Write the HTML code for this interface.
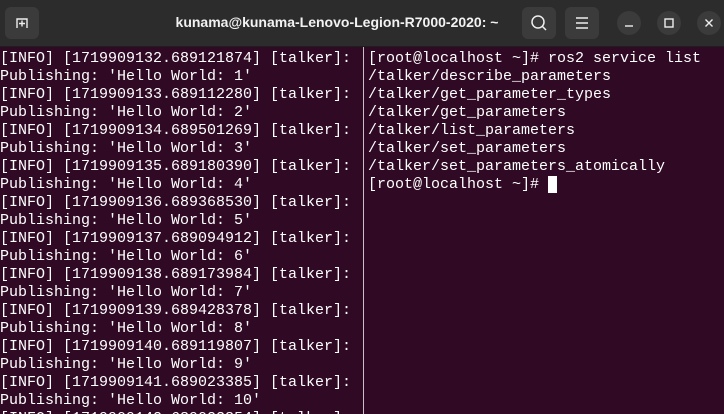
<!DOCTYPE html>
<html style="width:724px;height:414px;overflow:hidden"><head><style>
body{margin:0;width:724px;height:414px;overflow:hidden;position:relative;background:#300a24;font-family:"Liberation Sans",sans-serif}
.bar{position:absolute;left:0;top:0;width:724px;height:46px;background:#2c2c2c;border-bottom:1px solid #1e1e1e}
.btn{position:absolute;top:7px;height:32px;background:#3b3b3b;border-radius:6px}
.c{position:absolute;top:11px;width:24px;height:24px;border-radius:50%;background:#3b3b3b}
.title{position:absolute;left:0;width:674px;top:14px;text-align:center;color:#f2f2f2;font-weight:bold;font-size:14px}
pre{position:absolute;margin:0;font-family:"Liberation Mono",monospace;font-size:15px;line-height:18px;color:#fff}
.div{position:absolute;left:363px;top:47px;width:1px;height:367px;background:#c8c0c4}
</style></head><body>
<div class="bar">
<div class="btn" style="left:5px;width:34px"><svg width="34" height="32"><path d="M12 21v-9h10v9M17 13.5v6M14 16.5h6" stroke="#eee" stroke-width="1.4" fill="none"/></svg></div>
<div class="title">kunama@kunama-Lenovo-Legion-R7000-2020: ~</div>
<div class="btn" style="left:522px;width:34px"><svg width="34" height="32"><circle cx="16" cy="15" r="6" stroke="#eee" stroke-width="1.5" fill="none"/><path d="M20.5 19.5l3.5 3.5" stroke="#eee" stroke-width="1.5"/></svg></div>
<div class="btn" style="left:565px;width:34px"><svg width="34" height="32"><path d="M11 11h12M11 16h12M11 21h12" stroke="#eee" stroke-width="1.4"/></svg></div>
<div class="c" style="left:617px"><svg width="24" height="24"><path d="M8 15h8" stroke="#eee" stroke-width="1.4"/></svg></div>
<div class="c" style="left:657px"><svg width="24" height="24"><rect x="8" y="8" width="8" height="8" stroke="#eee" stroke-width="1.4" fill="none"/></svg></div>
<div class="c" style="left:697px"><svg width="24" height="24"><path d="M8.5 8.5l7 7M15.5 8.5l-7 7" stroke="#eee" stroke-width="1.4"/></svg></div>
</div>
<pre style="left:0;top:50px">[INFO] [1719909132.689121874] [talker]:
Publishing: 'Hello World: 1'
[INFO] [1719909133.689112280] [talker]:
Publishing: 'Hello World: 2'
[INFO] [1719909134.689501269] [talker]:
Publishing: 'Hello World: 3'
[INFO] [1719909135.689180390] [talker]:
Publishing: 'Hello World: 4'
[INFO] [1719909136.689368530] [talker]:
Publishing: 'Hello World: 5'
[INFO] [1719909137.689094912] [talker]:
Publishing: 'Hello World: 6'
[INFO] [1719909138.689173984] [talker]:
Publishing: 'Hello World: 7'
[INFO] [1719909139.689428378] [talker]:
Publishing: 'Hello World: 8'
[INFO] [1719909140.689119807] [talker]:
Publishing: 'Hello World: 9'
[INFO] [1719909141.689023385] [talker]:
Publishing: 'Hello World: 10'
[INFO] [1719909142.689023854] [talker]:</pre>
<div class="div"></div>
<pre style="left:368px;top:50px">[root@localhost ~]# ros2 service list
/talker/describe_parameters
/talker/get_parameter_types
/talker/get_parameters
/talker/list_parameters
/talker/set_parameters
/talker/set_parameters_atomically
[root@localhost ~]# <span style="background:#fff">&nbsp;</span></pre>
</body></html>
